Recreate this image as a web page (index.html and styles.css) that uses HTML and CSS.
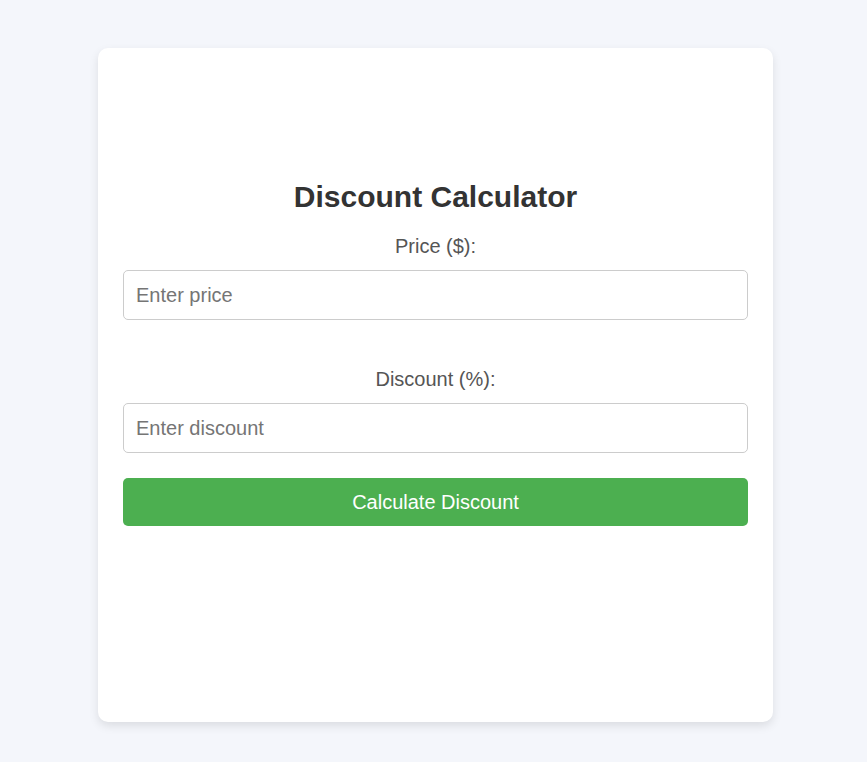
FILE: index.html
```html
<!DOCTYPE html>
<html lang="en">
<head>
<meta charset="utf-8">
<title>Discount Calculator</title>
<link rel="stylesheet" href="styles.css">
</head>
<body>
<div class="card">
  <h2 class="title">Discount Calculator</h2>
  <label class="label" for="price">Price ($):</label>
  <input class="field" id="price" type="number" placeholder="Enter price">
  <label class="label label-second" for="discount">Discount (%):</label>
  <input class="field" id="discount" type="number" placeholder="Enter discount">
  <button class="btn" type="button">Calculate Discount</button>
</div>
</body>
</html>
```

FILE: styles.css
```css
html, body {
  margin: 0;
  padding: 0;
}
body {
  background: #f4f6fb;
  font-family: "Liberation Sans", Arial, sans-serif;
  display: flex;
  justify-content: center;
  padding: 48px 0 40px 4px;
}
.card {
  box-sizing: border-box;
  width: 675px;
  height: 674px;
  background: #fff;
  border-radius: 10px;
  box-shadow: 0 4px 10px rgba(0, 0, 0, 0.1);
  padding: 132px 25px 0;
  display: flex;
  flex-direction: column;
  align-items: stretch;
  text-align: center;
}
.title {
  margin: 0;
  font-size: 30px;
  line-height: 34px;
  font-weight: bold;
  color: #333;
}
.label {
  display: block;
  margin-top: 21px;
  font-size: 20px;
  line-height: 22px;
  color: #555;
}
.label-second {
  margin-top: 48px;
}
.field {
  box-sizing: border-box;
  height: 50px;
  margin-top: 13px;
  padding: 0 12px;
  border: 1px solid #ccc;
  border-radius: 5px;
  font-family: inherit;
  font-size: 20px;
  color: #333;
  background: #fff;
  outline: none;
}
.field::placeholder {
  color: #757575;
}
.btn {
  box-sizing: border-box;
  height: 48px;
  margin-top: 25px;
  border: none;
  border-radius: 5px;
  background: #4caf50;
  color: #fff;
  font-family: inherit;
  font-size: 20px;
  cursor: pointer;
}
```
